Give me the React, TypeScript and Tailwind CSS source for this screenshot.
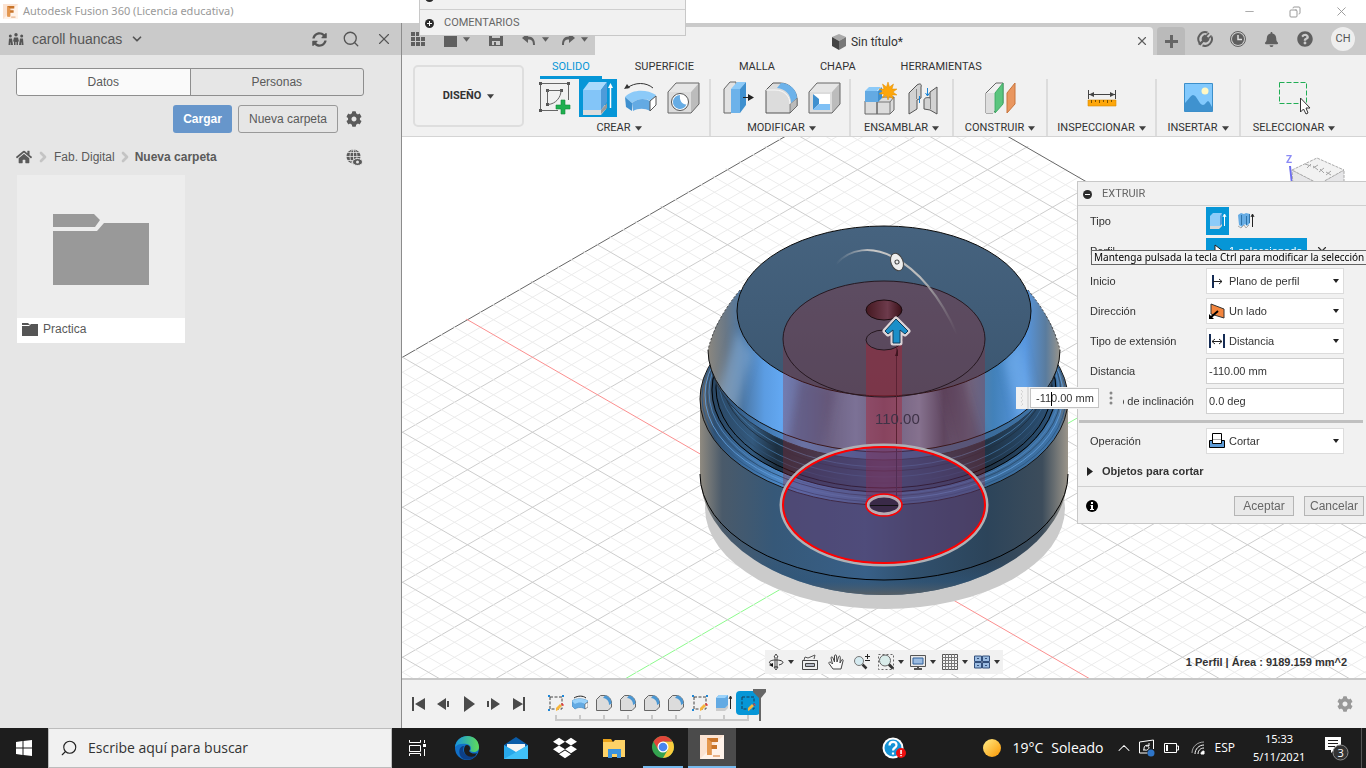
import type { ReactNode } from "react";
import { FaBell, FaCog, FaDropbox, FaHome, FaQuestionCircle, FaSyncAlt } from "react-icons/fa";
import { ChevronDown, ChevronRight, ChevronUp, Copy, Minus, Search, X } from "lucide-react";

function Caret({ className = "text-[#404040]" }: { className?: string }) {
  return (
    <svg width="7" height="5" viewBox="0 0 8 5" className={`shrink-0 ${className}`}>
      <path d="M0 0h8L4 5z" fill="currentColor" />
    </svg>
  );
}

function FusionLogo({ size }: { size: number }) {
  return (
    <svg width={size} height={size} viewBox="0 0 24 24" className="shrink-0">
      <path d="M0 0h24v24H0z" fill="#fbe3d2" />
      <path d="M0 24L24 0v24z" fill="#fff3ea" />
      <path d="M7 3h11v4h-6.500v3H17v4h-5.500v6H7z" fill="#c8742a" />
      <path d="M7 3l4.500 4v13H7z" fill="#e5974d" />
      <path d="M13 20h7v2h-7z" fill="#e9b48c" />
    </svg>
  );
}

/* ---------- ribbon icons, all on a 38px box ---------- */

function Icon38({ children }: { children: ReactNode }) {
  return (
    <svg width="38" height="38" viewBox="0 0 38 38" fill="none">
      {children}
    </svg>
  );
}

const SketchIcon = (
  <Icon38>
    <path d="M5 4.500h27M4.500 5v27M32.500 5v16M5 31.500h17" stroke="#666" />
    <g fill="#555">
      <path d="M3 3h3v3H3zM31 3h3v3h-3zM3 30h3v3H3zM10 10h3v3h-3zM24 10h3v3h-3zM10 24h3v3h-3z" />
    </g>
    <path d="M11.500 24V11.500H25C25 18 20 25 12 25.500" stroke="#666" />
    <path d="M25 21h4v5h5v4h-5v5h-4v-5h-5v-4h5z" fill="#1faf4f" stroke="#128a39" strokeWidth=".6" />
  </Icon38>
);

const ExtrudeIcon = (
  <Icon38>
    <path d="M4 30l4-4h19v4l-5 6H4z" fill="#ddd" />
    <path d="M22 35V31l6-7v5z" fill="#999" />
    <path d="M4 11l6-8h18l-6 8z" fill="#a9dafc" />
    <path d="M4 11h18v20H4z" fill="#83c5f8" />
    <path d="M22 11l6-8v20l-6 8z" fill="#4e9bd9" />
    <path d="M31.500 29V7" stroke="#fff" strokeWidth="1.500" />
    <path d="M29 9l2.500-5L34 9z" fill="#fff" />
  </Icon38>
);

const RevolveIcon = (
  <Icon38>
    <path d="M3 18C10 10 25 10 34 16l-4 7c-5-4-14-4-20 1z" fill="#8ccaf8" />
    <path d="M3 18l7 6v8l-6-4z" fill="#3f90cf" />
    <path d="M10 24c6-5 13-5 18-2v10c-5-3-12-3-17 0z" fill="#63aae3" />
    <path d="M28 22l6-5v9l-6 6z" fill="#fff" stroke="#555" />
    <path d="M5 9C13 3 24 3 31 9" stroke="#333" />
    <path d="M2 10l3-5 3 4z" fill="#333" />
  </Icon38>
);

const HoleIcon = (
  <Icon38>
    <path d="M3 13l8-9h23l-8 9z" fill="#e6e6e6" />
    <path d="M3 13h23v21H3z" fill="#dcdcdc" />
    <path d="M26 13l8-9v21l-8 9z" fill="#bcbcbc" />
    <path d="M3 34V13l8-9h23v21l-8 9z" stroke="#666" />
    <circle cx="15" cy="23" r="8.500" fill="#fff" stroke="#555" />
    <path d="M15 16a7 7 0 106.500 9.500C18 26 14 22 15 16z" fill="#66ace4" />
  </Icon38>
);

const PressPullIcon = (
  <Icon38>
    <path d="M4 10l6-7h6v24l-5 7H4z" fill="#e2e2e2" stroke="#666" />
    <path d="M11 10l6-7h9l-6 7z" fill="#8ccaf8" />
    <path d="M11 10h9v24h-9z" fill="#6cb2ea" />
    <path d="M20 10l6-7v23l-6 8z" fill="#3f90cf" />
    <path d="M23 18.500h7" stroke="#222" />
    <path d="M28 15l6 3.500-6 3.500z" fill="#222" />
  </Icon38>
);

const FilletIcon = (
  <Icon38>
    <path d="M3 34V11l7-7h7c10 0 17 8 17 17v6l-7 7z" fill="#dcdcdc" stroke="#555" />
    <path d="M27 34v-9l7-6v8z" fill="#bbb" stroke="#555" strokeWidth=".6" />
    <path d="M14 9l4-5c9 0 16 7 16 15l-6 5C28 15 22 10 14 9z" fill="#6cb2ea" />
    <path d="M3 11h9c9 0 15 6 15 14" stroke="#f8f8f8" />
  </Icon38>
);

const ShellIcon = (
  <Icon38>
    <path d="M3 13l8-9h23l-8 9z" fill="#e6e6e6" />
    <path d="M3 13h23v21H3z" fill="#dcdcdc" />
    <path d="M26 13l8-9v21l-8 9z" fill="#bcbcbc" />
    <path d="M3 34V13l8-9h23v21l-8 9z" stroke="#666" />
    <path d="M7 15h17v16H7z" fill="#fff" />
    <path d="M7 15l6 5v5l-6 6z" fill="#3f90cf" />
    <path d="M13 25h11v6H7z" fill="#7fc0f5" />
  </Icon38>
);

const ComponentIcon = (
  <Icon38>
    <path d="M4 22h12v13H4zM16 22l4-4h13v13l-4 4H16z" fill="#dcdcdc" stroke="#666" />
    <path d="M16 23h13v12M29 23l4-5" stroke="#777" />
    <path d="M4 12l4-4h12l-4 4z" fill="#8ccaf8" />
    <path d="M4 12h13v11H4z" fill="#63aae3" />
    <path d="M17 12l4-4v11l-4 4z" fill="#3f90cf" />
    <path d="M27 3l1.500 5 4-3-1.500 5h5l-4 3 4 3h-5l1.500 4-4-2.500L27 21l-1.500-4.500-4 2.500 1.500-4h-5l4-3-4-2h5l-1.500-5 4 3z" fill="#fda60a" stroke="#e08c00" strokeWidth=".5" />
  </Icon38>
);

const JointIcon = (
  <Icon38>
    <path d="M5 14l8-8c3-2 5-1 4 2v11l-4 2v9l-8 5z" fill="#d2d2d2" stroke="#555" />
    <path d="M33 8l-7 5v6c-3-1-6 0-6 2v9l6 1 7 4z" fill="#d2d2d2" stroke="#555" />
    <path d="M12.500 20V10M26.500 18v12" stroke="#888" />
    <path d="M15.500 17v7M23.500 9v8" stroke="#1d86d6" />
    <path d="M21.500 14l2 3 2-3" stroke="#1d86d6" />
  </Icon38>
);

const PlaneIcon = (
  <Icon38>
    <path d="M5 14L15 4h7v20L12 34H5z" fill="#f0f0f0" stroke="#666" />
    <path d="M5 14h8v20H5z" fill="#dedede" />
    <path d="M14 14l8-10v21l-8 9z" fill="#5bc57e" stroke="#3fa964" />
    <path d="M26 14l8-10v21l-8 9z" fill="#e9965f" stroke="#c8753c" />
  </Icon38>
);

const MeasureIcon = (
  <Icon38>
    <path d="M5.500 11v9M32.500 11v9M6 15.500h26" stroke="#444" />
    <path d="M6 15.500l5-2.500v5zM32 15.500L27 13v5z" fill="#444" />
    <path d="M5 21h28v6H5z" fill="#fda60a" stroke="#d88a00" strokeWidth=".6" />
    <path d="M8.500 21v3M12.500 21v2M16.500 21v3M20.500 21v2M24.500 21v3M28.500 21v2" stroke="#7c5200" />
  </Icon38>
);

const InsertIcon = (
  <Icon38>
    <path d="M5.500 4.500h28v28h-28z" fill="#82c9fd" stroke="#3c8fca" />
    <circle cx="26" cy="12" r="3.500" fill="#fff7c4" />
    <path d="M6 24c4-4 6-8 8-8 4 0 6 10 10 10 2 0 4-4 5-4s3 4 4 6v4H6z" fill="#3f92cf" />
  </Icon38>
);

const SelectIcon = (
  <Icon38>
    <path d="M4.500 3.500h27v21h-27z" stroke="#20ad54" strokeDasharray="5 2" />
    <path d="M25.500 19v14l3-3 2.500 5 2-1-2-5h4z" fill="#fff" stroke="#333" />
  </Icon38>
);

const ribbonGroups = [
  { label: "CREAR", width: "w-[185px] pl-[3px]", icons: [SketchIcon, ExtrudeIcon, RevolveIcon, HoleIcon], active: 1 },
  { label: "MODIFICAR", width: "w-[140px] pl-[3px]", icons: [PressPullIcon, FilletIcon, ShellIcon] },
  { label: "ENSAMBLAR", width: "w-[103px]", icons: [ComponentIcon, JointIcon] },
  { label: "CONSTRUIR", width: "w-[94px]", icons: [PlaneIcon] },
  { label: "INSPECCIONAR", width: "w-[109px]", icons: [MeasureIcon] },
  { label: "INSERTAR", width: "w-[84px]", icons: [InsertIcon] },
  { label: "SELECCIONAR", width: "w-[106px]", icons: [SelectIcon] },
];

/* ---------- title bar and data panel ---------- */

function TitleBar() {
  return (
    <header className="flex h-[23px] shrink-0 items-center bg-white pl-[3px] text-[#999]">
      <FusionLogo size={15} />
      <h1 className="ml-[5px] flex-1 font-['Noto_Sans',sans-serif] text-[11px]">Autodesk Fusion 360 (Licencia educativa)</h1>
      <button aria-label="Minimizar" className="flex w-[46px] justify-center"><Minus size={13} strokeWidth={1.5} /></button>
      <button aria-label="Restaurar" className="flex w-[46px] justify-center"><Copy size={12} strokeWidth={2} className="-scale-x-100" /></button>
      <button aria-label="Cerrar" className="mr-0.5 flex w-[46px] justify-center"><X size={15} strokeWidth={1.5} /></button>
    </header>
  );
}

function DataPanel() {
  return (
    <aside className="flex w-[402px] shrink-0 flex-col border-r border-[#8c8c8c] bg-[#e6e6e6] text-xs text-[#5a5a5a]">
      <div className="flex h-8 items-center bg-[#cacaca] pl-2 pr-2 text-[#555]">
        <svg width="16" height="12" viewBox="0 0 16 12" fill="currentColor">
          <circle cx="8" cy="1.700" r="1.700" />
          <circle cx="2.300" cy="3" r="1.500" />
          <circle cx="13.700" cy="3" r="1.500" />
          <path d="M6 4.500h4l1 4h-1V12H8.500V9h-1v3H6V8.500H5zM1 5.500h3l1 6.500H3V9.500h-.5V12H.500zM12 5.500h3l.5 6.500h-2V9.500H13V12h-2z" />
        </svg>
        <button className="ml-2 flex items-center gap-2 text-sm">
          caroll huancas <ChevronDown size={14} strokeWidth={3} />
        </button>
        <div className="ml-auto flex items-center gap-[15px]">
          <button aria-label="Actualizar"><FaSyncAlt size={15} /></button>
          <button aria-label="Buscar"><Search size={18} strokeWidth={1.75} /></button>
          <button aria-label="Cerrar panel"><X size={18} strokeWidth={1.5} /></button>
        </div>
      </div>
      <div className="mr-[37px] ml-4 mt-[13px] flex h-7 overflow-hidden rounded-[3px] border border-[#8e8e8e]">
        <button className="flex-1 border-r border-[#8e8e8e] bg-[#fafafa]">Datos</button>
        <button className="flex-1">Personas</button>
      </div>
      <div className="mr-[39px] mt-[9px] flex items-center justify-end">
        <button className="h-7 w-[59px] rounded-[3px] bg-[#6796cb] font-bold text-white">Cargar</button>
        <button className="ml-1.5 h-7 w-[100px] rounded-[3px] border border-[#999]">Nueva carpeta</button>
        <button aria-label="Ajustes" className="ml-2"><FaCog size={16} /></button>
      </div>
      <nav className="mr-[38px] ml-4 mt-4 flex h-4 items-center">
        <a href="#inicio" aria-label="Inicio"><FaHome size={16} /></a>
        <ChevronRight size={16} strokeWidth={4} className="ml-[3px] mr-[3px] text-[#c4c4c4]" />
        <a href="#fab">Fab. Digital</a>
        <ChevronRight size={16} strokeWidth={4} className="mx-0.5 text-[#c4c4c4]" />
        <a href="#nueva" className="font-bold">Nueva carpeta</a>
        <button aria-label="Ver en la web" className="ml-auto">
          <svg width="17" height="17" viewBox="0 0 17 17" fill="none">
            <circle cx="7.500" cy="7.500" r="7" fill="#5a5a5a" />
            <path d="M7.500 0v15M0 7.500h15M1.500 3.500h12M1.500 11.500h12" stroke="#e6e6e6" strokeWidth=".8" />
            <ellipse cx="7.500" cy="7.500" rx="3.500" ry="7" stroke="#e6e6e6" strokeWidth=".8" />
            <ellipse cx="11.500" cy="13" rx="5" ry="3.500" fill="#5a5a5a" stroke="#e6e6e6" />
            <circle cx="11.500" cy="13" r="1.500" fill="#e6e6e6" />
          </svg>
        </button>
      </nav>
      <a href="#practica" className="ml-[17px] mt-2.5 flex w-[168px] flex-col">
        <span className="flex h-[143px] items-center justify-center bg-[#ededed] pt-1">
          <svg width="96" height="72" viewBox="0 0 96 72" fill="#999">
            <path d="M0 1h41l6 6-5 7H0zM51 10h45v62H0V18h44z" />
          </svg>
        </span>
        <span className="flex h-[25px] items-center gap-[5px] bg-white pb-[3px] pl-[5px]">
          <svg width="16" height="13" viewBox="0 0 16 13" fill="#555">
            <path d="M0 0h6l2 2H0zM9 1h7v12H0V3h7z" />
          </svg>
          Practica
        </span>
      </a>
    </aside>
  );
}

/* ---------- document strip and ribbon ---------- */

function DocumentStrip() {
  return (
    <div className="flex h-8 shrink-0 bg-[#cacaca] text-[#5f5f5f]">
      <div className="flex w-[193px] shrink-0 items-center gap-[19px] pl-[9px]">
        <button aria-label="Panel de datos">
          <svg width="14" height="14" viewBox="0 0 14 14" fill="currentColor">
            <path d="M0 0h4v4H0zM5 0h4v4H5zM10 0h4v4h-4zM0 5h4v4H0zM5 5h4v4H5zM10 5h4v4h-4zM0 10h4v4H0zM5 10h4v4H5zM10 10h4v4h-4z" />
          </svg>
        </button>
        <button aria-label="Archivo" className="flex items-center gap-1.5">
          <svg width="13" height="16" viewBox="0 0 13 16" fill="currentColor"><path d="M0 0h9l4 3v13H0z" /></svg>
          <Caret className="text-[#5f5f5f]" />
        </button>
        <button aria-label="Guardar">
          <svg width="14" height="14" viewBox="0 0 14 14" fill="currentColor">
            <path fillRule="evenodd" d="M0 0h12l2 2v12H0zM3 1v5h8V1zM3 9v4h8V9zM5 10h2v3H5z" />
          </svg>
        </button>
        <div className="flex gap-3">
          <button aria-label="Deshacer" className="flex items-center gap-1.5">
            <svg width="14" height="12" viewBox="0 0 14 12"><path d="M0 5l6-5v3.500c5 0 7 3 7 8.500h-2c0-4-1-5.500-5-5.500V10z" fill="currentColor" /></svg>
            <Caret className="text-[#5f5f5f]" />
          </button>
          <button aria-label="Rehacer" className="flex items-center gap-1.5">
            <svg width="14" height="12" viewBox="0 0 14 12"><path d="M14 5L8 0v3.500C3 3.500 1 6.500 1 12h2c0-4 1-5.500 5-5.500V10z" fill="currentColor" /></svg>
            <Caret className="text-[#5f5f5f]" />
          </button>
        </div>
      </div>
      <div className="mt-1 flex flex-1 items-center rounded-tr bg-[#f1f1f1] pr-1">
        <div className="flex flex-1 items-center justify-center gap-1 pl-1 pt-px font-['Roboto',sans-serif] text-xs text-[#333]">
          <svg width="16" height="16" viewBox="0 0 16 16">
            <path d="M8 0l7 3-7 4-7-4z" fill="#aaa" />
            <path d="M1 3l7 4v9l-7-4z" fill="#444" />
            <path d="M15 3L8 7v9l7-4z" fill="#777" />
          </svg>
          Sin título*
        </div>
        <button aria-label="Cerrar documento"><X size={14} /></button>
      </div>
      <button aria-label="Nuevo diseño" className="ml-1 mt-1 flex w-7 items-center justify-center rounded-t bg-[#bababa]">
        <svg width="13" height="13" viewBox="0 0 13 13"><path d="M5 0h3v5h5v3H8v5H5V8H0V5h5z" fill="#666" /></svg>
      </button>
      <div className="ml-3 mr-[11px] flex items-center gap-[17px]">
        <button aria-label="Extensiones">
          <svg width="16" height="16" viewBox="0 0 16 16" fill="none">
            <path d="M10.500 1.500A7 7 0 002.500 12M5.500 14.500A7 7 0 0014.500 5.500" stroke="#5f5f5f" strokeWidth="2" />
            <path d="M1 13l4-3.500c-1-3 1-5 3-6L12.500 8c-1 3-3 4-6 3L3.500 14.500z" fill="#5f5f5f" />
            <path d="M9 5l3-3M11.500 7.500l3-3" stroke="#5f5f5f" strokeWidth="1.500" />
          </svg>
        </button>
        <button aria-label="Estado de trabajos">
          <svg width="16" height="16" viewBox="0 0 16 16" fill="none">
            <circle cx="8" cy="8" r="7.500" stroke="#5f5f5f" />
            <circle cx="8" cy="8" r="6" fill="#5f5f5f" />
            <path d="M8 4v4.500h4" stroke="#e0e0e0" strokeWidth="1.500" />
          </svg>
        </button>
        <button aria-label="Notificaciones" className="px-px"><FaBell size={15} /></button>
        <button aria-label="Ayuda"><FaQuestionCircle size={16} /></button>
        <button className="ml-px h-6 w-6 rounded-full bg-[#eee] font-['Roboto',sans-serif] text-[11px] text-[#555]">CH</button>
      </div>
    </div>
  );
}

function Ribbon() {
  return (
    <div className="flex h-[82px] shrink-0 border-b border-[#d4d4d4] bg-[#f1f1f1] font-['Roboto',sans-serif] text-[11px] text-[#333]">
      <button className="ml-[11px] mt-2.5 flex h-[62px] w-[111px] shrink-0 items-center justify-center gap-1.5 rounded-[5px] border-2 border-[#dedede] font-bold">
        DISEÑO <Caret />
      </button>
      <div className="ml-0.5 flex flex-1 flex-col">
        <div role="tablist" className="ml-3.5 flex h-6 gap-[21px]">
          <button role="tab" aria-selected="true" className="border-b-[3px] border-[#0696d7] px-3 pt-1 text-[#0696d7]">SOLIDO</button>
          {["SUPERFICIE", "MALLA", "CHAPA", "HERRAMIENTAS"].map((tab) => (
            <button key={tab} role="tab" aria-selected="false" className="border-b-[3px] border-transparent px-3 pt-1">{tab}</button>
          ))}
        </div>
        <div className="flex">
          {ribbonGroups.map((group, index) => (
            <section key={group.label} className={`flex ${group.width} shrink-0 flex-col items-center ${index < 6 ? "border-r-2 border-[#dcdcdc]" : ""}`}>
              <div className="flex gap-[5px]">
                {group.icons.map((icon, i) => (
                  <button key={i} aria-label={`${group.label} ${i + 1}`} className={group.active === i ? "bg-[#0696d7]" : ""}>{icon}</button>
                ))}
              </div>
              <button className="flex h-[19px] items-center gap-1 pt-[3px]">{group.label} <Caret /></button>
            </section>
          ))}
        </div>
      </div>
    </div>
  );
}

/* ---------- 3D canvas ---------- */

// Construction grid: both line families run at 30 degrees, one cell is 26 wide.
function GridLines() {
  const slope = 0.577;
  const lines: ReactNode[] = [];
  for (let i = -30; i <= 90; i++) {
    const x = 663 + i * 26;
    const color = i === 0 ? "#8dfa8d" : i === -30 ? "#666" : i % 5 === 0 ? "#cdcdcd" : "#ececec";
    lines.push(<path key={`a${i}`} d={`M${x - 300} ${657 + 300 * slope}L${x + 1400} ${657 - 1400 * slope}`} stroke={color} />);
  }
  for (let i = -70; i <= 33; i++) {
    const x = 1052 + i * 26;
    const color = i === 0 ? "#fb8f8f" : i === 33 ? "#666" : i % 5 === 0 ? "#cdcdcd" : "#ececec";
    lines.push(<path key={`b${i}`} d={`M${x + 300} ${657 + 300 * slope}L${x - 1400} ${657 - 1400 * slope}`} stroke={color} />);
  }
  return (
    <g fill="none" clipPath="url(#floor)">
      {lines}
    </g>
  );
}

const grooves = [
  { cy: 397, rx: 182, ry: 105, color: "#2f5a87" },
  { cy: 395, rx: 179, ry: 104, color: "#5c97d4" },
  { cy: 393, rx: 177, ry: 103, color: "#2d4f72" },
  { cy: 392, rx: 175, ry: 102, color: "#4c82b9" },
  { cy: 390, rx: 172, ry: 102, color: "#000" },
  { cy: 388, rx: 168, ry: 100, color: "#000" },
  { cy: 384, rx: 167, ry: 99, color: "#2f4f70" },
  { cy: 380, rx: 165, ry: 97, color: "#3a6690" },
  { cy: 375, rx: 163, ry: 96, color: "#1f3245" },
  { cy: 370, rx: 164, ry: 97, color: "#43739f" },
];

const coneShape = "M708 350A176 102 0 001060 350Q1053 320 1028 290H740Q715 320 708 350z";

function Model() {
  return (
    <svg className="absolute inset-0 h-full w-full" viewBox="402 137 964 541" preserveAspectRatio="xMidYMid slice">
      <defs>
        <clipPath id="floor"><path d="M402 356L896 70L1366 341V678H402z" /></clipPath>
        <linearGradient id="body">
          <stop offset="0" stopColor="#8f8a80" />
          <stop offset=".06" stopColor="#4a5a6a" />
          <stop offset=".2" stopColor="#365878" />
          <stop offset=".45" stopColor="#386088" />
          <stop offset=".58" stopColor="#30506d" />
          <stop offset=".78" stopColor="#2c445a" />
          <stop offset=".93" stopColor="#3c4c5b" />
          <stop offset="1" stopColor="#9b958a" />
        </linearGradient>
        <linearGradient id="base" gradientUnits="userSpaceOnUse" x1="0" y1="560" x2="0" y2="596">
          <stop offset="0" stopColor="#2d5274" stopOpacity="0" />
          <stop offset=".6" stopColor="#2f5578" stopOpacity=".6" />
          <stop offset="1" stopColor="#5c6062" />
        </linearGradient>
        <linearGradient id="rim">
          <stop offset="0" stopColor="#776f66" />
          <stop offset=".04" stopColor="#2f5072" />
          <stop offset=".12" stopColor="#3c6d9f" />
          <stop offset=".27" stopColor="#5597dd" />
          <stop offset=".5" stopColor="#44719f" />
          <stop offset=".8" stopColor="#3a6b9a" />
          <stop offset=".97" stopColor="#3f74a8" />
          <stop offset="1" stopColor="#766f66" />
        </linearGradient>
        <linearGradient id="neck">
          <stop offset="0" stopColor="#294561" />
          <stop offset=".12" stopColor="#33597d" />
          <stop offset=".19" stopColor="#1d2f40" />
          <stop offset=".5" stopColor="#34597f" />
          <stop offset=".8" stopColor="#1f3346" />
          <stop offset="1" stopColor="#2c5379" />
        </linearGradient>
        <linearGradient id="cone" gradientUnits="userSpaceOnUse" x1="708" y1="0" x2="1060" y2="0">
          <stop offset="0" stopColor="#8b877f" />
          <stop offset=".05" stopColor="#6a7886" />
          <stop offset=".1" stopColor="#4c78a6" />
          <stop offset=".16" stopColor="#5b9ce2" />
          <stop offset=".21" stopColor="#63a8f2" />
          <stop offset=".28" stopColor="#5590d0" />
          <stop offset=".34" stopColor="#5a7eac" />
          <stop offset=".42" stopColor="#7096c8" />
          <stop offset=".5" stopColor="#5c7aa6" />
          <stop offset=".6" stopColor="#7f96bd" />
          <stop offset=".67" stopColor="#465677" />
          <stop offset=".74" stopColor="#62809f" />
          <stop offset=".81" stopColor="#4281b9" />
          <stop offset=".9" stopColor="#5796df" />
          <stop offset=".96" stopColor="#5a7c9e" />
          <stop offset="1" stopColor="#98948b" />
        </linearGradient>
        <linearGradient id="top" x2="0" y2="1">
          <stop offset="0" stopColor="#46637f" />
          <stop offset="1" stopColor="#3b5670" />
        </linearGradient>
        <linearGradient id="bore">
          <stop offset="0" stopColor="#451820" />
          <stop offset=".6" stopColor="#6d3b4c" />
          <stop offset="1" stopColor="#3a1018" />
        </linearGradient>
        <linearGradient id="arc">
          <stop offset="0" stopColor="#bbb" stopOpacity="0" />
          <stop offset=".3" stopColor="#c8c8c8" />
          <stop offset=".7" stopColor="#bbb" />
          <stop offset="1" stopColor="#999" stopOpacity="0" />
        </linearGradient>
        <filter id="soft"><feGaussianBlur stdDeviation="4" /></filter>
        <clipPath id="coneClip"><path d={coneShape} /></clipPath>
      </defs>

      <GridLines />

      <ellipse cx="885" cy="508" rx="180" ry="101" fill="#cbcbcb" />
      <path d="M700 399V474A184 121 0 001068 474V399z" fill="url(#body)" />
      <path d="M700 474A184 106 0 001068 474A184 121 0 01700 474z" fill="url(#base)" />
      <path d="M700 474A184 106 0 001068 474" fill="none" stroke="#000" />
      <ellipse cx="884" cy="399" rx="184" ry="106" fill="url(#rim)" stroke="#151515" />
      <ellipse cx="884" cy="390" rx="173" ry="102" fill="url(#neck)" />
      {grooves.map((g) => (
        <ellipse key={g.cy} cx="884" cy={g.cy} rx={g.rx} ry={g.ry} fill="none" stroke={g.color} />
      ))}
      <ellipse cx="884" cy="355" rx="174" ry="105" fill="url(#rim)" stroke="#26384b" />

      <path d={coneShape} fill="url(#cone)" />
      <g clipPath="url(#coneClip)">
        <g filter="url(#soft)">
          <path d="M738 330L715 400L735 412L752 355z" fill="#8db4dc" opacity=".5" />
          <path d="M800 378L785 460L818 466L836 390z" fill="#40608f" opacity=".5" />
          <path d="M940 385L960 460L985 450L962 375z" fill="#39415e" opacity=".4" />
          <path d="M1004 360L1020 430L1036 410L1020 340z" fill="#74b0f0" opacity=".6" />
        </g>
      </g>
      <path d="M708 350A176 102 0 001060 350" fill="none" stroke="#111" />
      <path d="M740 290Q715 320 708 350M1028 290Q1053 320 1060 350" fill="none" stroke="#444" strokeDasharray="2 2" />
      <ellipse cx="884" cy="311" rx="147" ry="85" fill="url(#top)" stroke="#0b0b0b" />

      {/* cut preview */}
      <path d="M783 339A101 58 0 01985 339V505A101 59 0 01783 505z" fill="#962832" opacity=".33" />
      <path d="M866 340A18 10 0 00902 340V505A18 10 0 01866 505z" fill="#b01f30" opacity=".4" />
      <ellipse cx="884" cy="339" rx="101" ry="58" fill="none" stroke="#261820" />
      <ellipse cx="884" cy="310" rx="18" ry="10" fill="url(#bore)" stroke="#1c0c10" />
      <ellipse cx="884" cy="340" rx="18" ry="10" fill="none" stroke="#261820" />
      <path d="M896.500 345V505" stroke="#5a2233" />
      <path d="M895 356l3-8v8z" fill="#3f1520" />
      <text x="875" y="424" fontSize="15" fill="#3f3347" fontFamily="Liberation Sans, sans-serif">110.00</text>

      <ellipse cx="884" cy="505" rx="101" ry="59" fill="#4049a0" opacity=".3" />
      <ellipse cx="884" cy="505" rx="103" ry="60" fill="none" stroke="#aeb0b5" strokeWidth="3" />
      <ellipse cx="884" cy="505" rx="101" ry="58" fill="none" stroke="#f00" strokeWidth="2" />
      <ellipse cx="884" cy="505" rx="16" ry="9" fill="#3a2a48" stroke="#b9aab2" strokeWidth="3" />
      <ellipse cx="884" cy="505" rx="18" ry="11" fill="none" stroke="#f00" strokeWidth="1.500" />
      <path d="M870 505.500h28" stroke="#111" />

      {/* taper handle and direction arrow */}
      <path d="M836 264C850 248 872 246 893 257C920 271 940 296 957 334" fill="none" stroke="url(#arc)" strokeWidth="2" />
      <ellipse cx="897" cy="262" rx="6" ry="9" transform="rotate(-22 897 262)" fill="#eee" stroke="#444" />
      <ellipse cx="897" cy="262" rx="2" ry="2" transform="rotate(-22 897 262)" fill="none" stroke="#444" />
      <path d="M896 319L908 331L905 334L900 330V343H893V330L888 334L885 331z" fill="#1a8fc9" stroke="#ddd5d8" strokeWidth="5" strokeLinejoin="round" />
      <path d="M896 319L908 331L905 334L900 330V343H893V330L888 334L885 331z" fill="#1a8fc9" stroke="#123f5c" strokeLinejoin="round" />

      {/* view cube */}
      <text x="1286" y="163" fontSize="10" fontWeight="bold" fill="#8b8bf5" fontFamily="Roboto, sans-serif">Z</text>
      <path d="M1290 166L1292 184" stroke="#6c6cf0" strokeWidth="2" />
      <path d="M1292 170L1319 184L1344 170V200H1294z" fill="#e6e6e8" stroke="#aaa" strokeDasharray="3 1" />
      <path d="M1292 170L1317 158L1344 170L1319 184z" fill="#f2f2f2" stroke="#aaa" strokeDasharray="3 1" />
      <path d="M1305 164l6 2M1307 168l4-4M1313 168l5-3M1313 166l5 4M1319 172l5-4M1320 169l4 4M1326 175l5-4M1326 172l5 3" stroke="#a5a5a5" />
    </svg>
  );
}

/* ---------- extrude dialog ---------- */

function DialogRow({ id, label, children }: { id: string; label: string; children: ReactNode }) {
  return (
    <div className="flex h-[30px] items-center">
      <label htmlFor={id} className="w-[116px] shrink-0">{label}</label>
      {children}
    </div>
  );
}

function DialogSelect({ id, value, icon }: { id: string; value: string; icon: ReactNode }) {
  return (
    <span className="flex h-[26px] w-[138px] items-center border border-[#dcdcdc] bg-white pl-0.5 pr-1">
      <svg width="16" height="16" viewBox="0 0 16 16" fill="none" className="shrink-0">{icon}</svg>
      <select id={id} defaultValue={value} className="ml-1 min-w-0 flex-1 appearance-none bg-transparent outline-none">
        <option>{value}</option>
      </select>
      <svg width="6" height="4" viewBox="0 0 6 4"><path d="M0 0h6L3 4z" fill="#222" /></svg>
    </span>
  );
}

function ExtrudeDialog() {
  return (
    <section aria-label="Extruir" className="absolute right-0 top-11 w-[289px] border border-r-0 border-[#c8c8c8] bg-[#f1f1f1] text-[11px] text-[#333]">
      <div className="flex h-6 items-center gap-2.5 border-b border-[#cfcfcf] pl-[5px] pt-px font-['Roboto',sans-serif] text-[#666]">
        <svg width="9" height="9" viewBox="0 0 9 9"><circle cx="4.500" cy="4.500" r="4.500" fill="#2c2c2c" /><path d="M2 4h5v1H2z" fill="#fff" /></svg>
        EXTRUIR
      </div>
      <div className="pl-3">
        <DialogRow id="tipo" label="Tipo">
          <button id="tipo" aria-label="Extruir" className="flex h-7 w-[23px] items-center justify-center bg-[#0696d7]">
            <svg width="18" height="18" viewBox="0 0 18 18"><path d="M1 4l3-3h9v11l-2 2H1z" fill="#8ccbf9" /><path d="M11 4l2-3v12l-2 2z" fill="#4e9bd9" /><path d="M1 14h10l2-2v2l-3 3H1z" fill="#d7d7d7" /><path d="M15.500 14V3M14 5l1.500-3L17 5" stroke="#fff" fill="none" /></svg>
          </button>
          <button aria-label="Extrusión delgada" className="ml-2">
            <svg width="18" height="18" viewBox="0 0 18 18"><path d="M1 3l3-2 3 1 2-1 4 1v9l-3 3-2-2-3 3-3-2z" fill="#66ace4" /><path d="M4.500 3v10M9.500 4v9M12.500 2v9" stroke="#2f73a8" /><path d="M1 14l3 2 3-3 2 3 3-3" stroke="#aaa" fill="none" /><path d="M15.500 15V3M14 5l1.500-3L17 5" stroke="#222" fill="none" /></svg>
          </button>
        </DialogRow>
        <DialogRow id="perfil" label="Perfil">
          <button id="perfil" className="flex h-[26px] w-[101px] items-center gap-[5px] bg-[#0696d7] pl-2 text-white">
            <svg width="10" height="14" viewBox="0 0 10 14"><path d="M1 1v11l3-3 2 4 2-1-2-4h4z" fill="#fff" stroke="#222" /></svg>
            1 seleccionado
          </button>
          <button aria-label="Borrar selección" className="ml-2"><X size={14} /></button>
        </DialogRow>
        <DialogRow id="inicio" label="Inicio">
          <DialogSelect id="inicio" value="Plano de perfil" icon={<><path d="M4 2v13" stroke="#152c55" strokeWidth="2" /><path d="M4 8.500h9M10 6l3 2.500L10 11" stroke="#222" /></>} />
        </DialogRow>
        <DialogRow id="direccion" label="Dirección">
          <DialogSelect id="direccion" value="Un lado" icon={<><path d="M2 1l13 5v9L2 11z" fill="#f3853e" stroke="#333" /><path d="M1 15l8-7" stroke="#000" strokeWidth="2" /><path d="M0 16v-5l5 5z" fill="#000" /></>} />
        </DialogRow>
        <DialogRow id="extension" label="Tipo de extensión">
          <DialogSelect id="extension" value="Distancia" icon={<><path d="M1 1v14M15 1v14" stroke="#152c55" strokeWidth="2" /><path d="M3 8.500h10M6 6L3 8.500 6 11M10 6l3 2.500L10 11" stroke="#222" /></>} />
        </DialogRow>
        <DialogRow id="distancia" label="Distancia">
          <input id="distancia" defaultValue="-110.00 mm" className="h-[26px] w-[138px] border border-[#cfcfcf] bg-white px-0.5 outline-none" />
        </DialogRow>
        <DialogRow id="angulo" label="Ángulo de inclinación">
          <input id="angulo" defaultValue="0.0 deg" className="h-[26px] w-[138px] border border-[#cfcfcf] bg-white px-0.5 outline-none" />
        </DialogRow>
      </div>
      <hr className="mb-[3px] ml-px mr-[3px] mt-1 border-t-3 border-[#c0c0c0]" />
      <div className="pl-3">
        <DialogRow id="operacion" label="Operación">
          <DialogSelect id="operacion" value="Cortar" icon={<><path d="M.5 7.500h15v7H.500z" fill="#5d9bd6" stroke="#000" /><path d="M3.500.500h9v10h-9z" fill="#fff" stroke="#000" /><path d="M4 6.500h8" stroke="#aaa" /></>} />
        </DialogRow>
        <button className="-ml-[3px] flex h-[30px] items-center gap-[9px] text-[11px] font-bold">
          <svg width="6" height="9" viewBox="0 0 6 9"><path d="M0 0l6 4.500L0 9z" fill="#222" /></svg>
          Objetos para cortar
        </button>
      </div>
      <div className="flex h-[37px] items-center border-t border-[#cfcfcf] pl-2 pr-0.5 pt-px text-xs text-[#666]">
        <svg width="12" height="12" viewBox="0 0 12 12"><circle cx="6" cy="6" r="6" fill="#000" /><path d="M5 2h2v2H5zM4.500 5H7v4h1v1H4V9h1V6h-.5z" fill="#fff" /></svg>
        <button className="ml-auto h-5 w-[60px] border border-[#b5b5b5] bg-[#e9e9e9]">Aceptar</button>
        <button className="ml-2.5 h-5 w-[60px] border border-[#b5b5b5] bg-[#e9e9e9]">Cancelar</button>
      </div>
    </section>
  );
}

// Floating value box attached to the extrude arrow
function ValueBox() {
  return (
    <div className="absolute right-[243px] top-[250px] flex h-[22px] w-[107px] items-center bg-[#f1f1f1]">
      <svg width="14" height="22" viewBox="0 0 14 22"><path d="M5 3l2 2-2 2 2 2-2 2 2 2-2 2 2 2-2 2" fill="none" stroke="#c4c4c4" strokeDasharray="1 1" /><path d="M11 0h2v22h-2z" fill="#dcdcdc" /></svg>
      <span className="relative">
        <input aria-label="Distancia de extrusión" defaultValue="-110.00 mm" className="block h-5 w-[69px] border border-[#c4c4c4] bg-white pl-[5px] text-[11px] text-[#333] outline-none" />
        <i className="absolute left-[21px] top-1 h-3.5 w-px bg-black" />
      </span>
      <svg width="4" height="14" viewBox="0 0 4 14" className="ml-2.5" fill="#888"><circle cx="2" cy="2" r="1.500" /><circle cx="2" cy="7" r="1.500" /><circle cx="2" cy="12" r="1.500" /></svg>
    </div>
  );
}

const navTools = [
  {
    label: "Órbita",
    caret: true,
    icon: <><path d="M7 3v10h2V3h1L8 0 6 3zM6 13h4l-2 3z" fill="#fff" stroke="#444" /><path d="M5 11C-1 9 1 6 8 6s10 3 3 5" stroke="#333" /><path d="M1 11l4-2v4z" fill="#111" /></>,
  },
  {
    label: "Mirar a",
    icon: <><path d="M.5 6.500h15v9H.500z" fill="#eee" stroke="#444" /><path d="M3.500 9.500h9v3h-9z" fill="#b4b9c4" stroke="#444" /><path d="M2 6l1-3 3 1 7-3-1 4" stroke="#555" /></>,
  },
  {
    label: "Encuadre",
    icon: <path d="M5 15L1 9.500c-.5-1.500 1-2 2-1L4.500 10 3 4c0-1.500 1.500-1.500 2 0l1.500 4L6.500 2c0-1.500 2-1.500 2 0L9 8l1.500-5c.5-1.500 2-1 1.800.5L12 9l1.500-3c.8-1 2-.5 1.500 1l-2 8z" fill="#fafafa" stroke="#444" />,
  },
  {
    label: "Zoom",
    icon: <><circle cx="5" cy="7" r="4.500" fill="#d5eaf0" stroke="#777" /><path d="M8.500 10.500l4 4" stroke="#333" strokeWidth="2.500" /><path d="M11 2.500h5M13.500 0v5M11 6.500h5" stroke="#222" /></>,
  },
  {
    label: "Ajustar",
    caret: true,
    icon: <><path d="M.5.500h15v15H.500z" stroke="#666" strokeDasharray="2 2" /><circle cx="7" cy="6.500" r="5.500" fill="#d9ecea" stroke="#666" /><path d="M11 10.500l4 4" stroke="#333" strokeWidth="3" /></>,
  },
  {
    label: "Visualización",
    caret: true,
    icon: <><path d="M.5 1.500h15v11H.500z" fill="#e8e8e8" stroke="#555" /><path d="M3 4h10v6H3z" fill="#9bbce2" stroke="#33639c" /><path d="M4 15h8M8 12v3" stroke="#555" strokeWidth="2" /></>,
  },
  {
    label: "Rejilla",
    caret: true,
    icon: <><path d="M.5.500h15v15H.500z" fill="#f5f5f5" stroke="#555" /><path d="M3.500 0v16M6.500 0v16M9.500 0v16M12.500 0v16M0 3.500h16M0 6.500h16M0 9.500h16M0 12.500h16" stroke="#777" /></>,
  },
  {
    label: "Ventanas",
    caret: true,
    icon: <><path d="M.5 2h7v5.500h-7zM8.500 2h7v5.500h-7zM.5 8.500h7V14h-7zM8.500 8.500h7V14h-7z" fill="#9bbce2" stroke="#33507c" /><path d="M3 4h2v1H3zM11 4h2v1h-2zM3 11h2v1H3zM11 11h2v1h-2z" fill="#33507c" /></>,
  },
];

function Viewport() {
  return (
    <main className="relative min-h-0 flex-1 overflow-hidden bg-white">
      <Model />
      <ExtrudeDialog />
      <div role="tooltip" className="absolute right-0 top-[113px] h-[15px] w-[275px] overflow-hidden whitespace-nowrap border border-r-0 border-[#646464] bg-[#f2f2f2] pl-0.5 font-['Noto_Sans',sans-serif] text-[10px] leading-[13px] text-black">
        Mantenga pulsada la tecla Ctrl para modificar la selección
      </div>
      <ValueBox />
      <div className="absolute bottom-1 left-1/2 flex h-6 w-[238px] -translate-x-1/2 items-center gap-1.5 bg-[#f1f1f1] pl-[3px]">
        {navTools.map((tool) => (
          <button key={tool.label} aria-label={tool.label} className={`flex shrink-0 items-center gap-1 ${tool.caret ? "" : "px-0.5"}`}>
            <svg width="16" height="16" viewBox="0 0 16 16" fill="none">{tool.icon}</svg>
            {tool.caret && <svg width="6" height="4" viewBox="0 0 6 4"><path d="M0 0h6L3 4z" fill="#333" /></svg>}
          </button>
        ))}
      </div>
      <p className="absolute bottom-2 right-[19px] text-[11px] font-bold text-[#333]">1 Perfil | Área : 9189.159 mm^2</p>
    </main>
  );
}

/* ---------- timeline ---------- */

const sketchFeature = (
  <>
    <path d="M2 2h12v12H2z" stroke="#444" strokeDasharray="3 1.500" />
    <path d="M0 0h2v2H0zM14 0h2v2h-2zM0 14h2v2H0z" fill="#1d86d6" />
    <path d="M8 16v-3l4-4 2 2-4 4z" fill="#f8b63c" />
    <path d="M13 9l1-1 2 2-1 1z" fill="#e33" />
  </>
);

const activeSketchFeature = (
  <>
    <path d="M2 2h12v12H2z" stroke="#1b3a55" strokeDasharray="3 1.500" />
    <path d="M8 16v-3l4-4 2 2-4 4z" fill="#f8b63c" />
    <path d="M13 9l1-1 2 2-1 1z" fill="#b0506a" />
  </>
);

const filletFeature = (
  <>
    <path d="M.5 15.500v-11l4-4H8c5 0 7.500 4 7.500 8V12L12 15.500z" fill="#dcdcdc" stroke="#666" />
    <path d="M7 3l2-2.500c4 .5 6.500 4 6.500 8L13 10c0-4-2-6.500-6-7z" fill="#4b97d3" />
  </>
);

const features = [
  { name: "Boceto 1", icon: sketchFeature },
  {
    name: "Revolución",
    icon: <><path d="M0 6c4-3 11-3 16 0v5l-3 3c-3-2-7-2-10 0l-3-3z" fill="#63aae3" stroke="#3c83bb" strokeWidth=".6" /><path d="M0 6c4-3 11-3 16 0l-3 3c-3-2-7-2-10 0z" fill="#9ad2fa" /><path d="M2 3c4-2.500 9-2.500 12 0" stroke="#222" /><path d="M13 9l3-2v5l-3 2z" fill="#fff" stroke="#555" strokeWidth=".6" /></>,
  },
  { name: "Empalme 1", icon: filletFeature },
  { name: "Empalme 2", icon: filletFeature },
  { name: "Empalme 3", icon: filletFeature },
  { name: "Empalme 4", icon: filletFeature },
  { name: "Boceto 2", icon: sketchFeature },
  {
    name: "Extrusión",
    icon: <><path d="M0 12h9l3-2v3l-3 3H0z" fill="#ccc" /><path d="M0 3l3-3h9v10l-3 3H0z" fill="#63aae3" /><path d="M0 3l3-3h9L9 3z" fill="#9ad2fa" /><path d="M14.500 14V2M13 4l1.500-3L16 4" stroke="#222" /></>,
  },
  { name: "Boceto 3", icon: activeSketchFeature },
];

const transport = [
  { label: "Ir al inicio", d: "M1 1h2v14H1zM14 2v12L4 8z" },
  { label: "Paso atrás", d: "M10 2v12L1 8zM11 5h2v6h-2z" },
  { label: "Reproducir", d: "M3 0l11 8-11 8z" },
  { label: "Paso adelante", d: "M5 2v12l9-6zM1 5h2v6H1z" },
  { label: "Ir al final", d: "M12 1h2v14h-2zM2 2v12l10-6z" },
];

function Timeline() {
  return (
    <footer className="flex h-[50px] shrink-0 border-t-2 border-[#c8c8c8] bg-[#f1f1f1]">
      <div className="ml-[9px] flex items-center gap-[9px]">
        {transport.map((item) => (
          <button key={item.label} aria-label={item.label}>
            <svg width="16" height="16" viewBox="0 0 16 16" fill="#4a4a4a"><path d={item.d} /></svg>
          </button>
        ))}
      </div>
      <div className="relative ml-[17px] mt-[11px] h-[31px]">
        <div className="flex">
          {features.map((feature, index) => (
            <button key={feature.name} aria-label={feature.name} className={`flex h-6 w-6 items-center justify-center ${index === 8 ? "rounded-sm bg-[#0696d7]" : ""}`}>
              <svg width="16" height="16" viewBox="0 0 16 16" fill="none">{feature.icon}</svg>
            </button>
          ))}
        </div>
        <svg width="216" height="7" viewBox="0 0 216 7" fill="none">
          <path d="M12 0v5h192V0M36 0v5M60 0v5M84 0v5M108 0v5M132 0v5M156 0v5M180 0v5" stroke="#c9c9c9" strokeWidth="2" />
        </svg>
        <svg width="13" height="32" viewBox="0 0 13 32" className="absolute -right-1.5 -top-0.5"><path d="M0 0h13v3L8 9v23H6V9L0 3z" fill="#666" /></svg>
      </div>
      <button aria-label="Ajustes de la línea de tiempo" className="ml-auto mr-[13px] text-[#999]"><FaCog size={16} /></button>
    </footer>
  );
}

/* ---------- Windows taskbar ---------- */

function Taskbar() {
  return (
    <footer className="flex h-10 shrink-0 bg-[#1d1d1d] font-['Open_Sans',sans-serif] text-white">
      <button aria-label="Inicio" className="flex w-12 items-center justify-center">
        <svg width="16" height="16" viewBox="0 0 16 16" fill="#fff"><path d="M0 2l6.500-1v6.500H0zM7.500 1L16 0v7.500H7.500zM0 8.500h6.500V15L0 14zM7.500 8.500H16V16l-8.500-1z" /></svg>
      </button>
      <label className="flex w-[344px] items-center border border-[#bcbcbc] bg-[#f1f1f1] pl-[11px]">
        <Search size={18} strokeWidth={1.5} className="-scale-x-100 text-[#222]" />
        <input aria-label="Buscar" placeholder="Escribe aquí para buscar" className="ml-2.5 flex-1 bg-transparent text-sm outline-none placeholder:text-[#333]" />
      </label>
      <button aria-label="Vista de tareas" className="flex w-[50px] items-center justify-center">
        <svg width="17" height="16" viewBox="0 0 17 16" fill="none" stroke="#fff"><path d="M.5 0v2.500h11V0M.5 5.500h11v6H.500zM.5 16v-2.500h11V16M15.500 0v3M15.500 9v7" /><path d="M14 4h3v3h-3z" fill="#fff" stroke="none" /></svg>
      </button>
      <button aria-label="Edge" className="flex w-[49px] items-center justify-center">
        <svg width="24" height="24" viewBox="0 0 24 24">
          <defs><linearGradient id="edge"><stop offset="0" stopColor="#1794e0" /><stop offset="1" stopColor="#5fdc58" /></linearGradient></defs>
          <circle cx="12" cy="12" r="12" fill="#1170c8" />
          <path d="M0 11C2-3 23-4 24 11c0 5-5 6-9 4 2-2 1-6-3-7C7 7 2 8 0 11z" fill="url(#edge)" />
          <path d="M9 10c-3 6 2 12 12 9-4 6-12 6-15 2S4 10 9 10z" fill="#0c3f86" />
          <path d="M12 9c3 0 4 4 2 6 2 3 6 3 8 2l-2 3c-6 2-11-1-11-6 0-3 1-5 3-5z" fill="#1d1d1d" />
        </svg>
      </button>
      <button aria-label="Correo" className="flex w-[49px] items-center justify-center">
        <svg width="24" height="24" viewBox="0 0 24 24"><path d="M0 9l12-8 12 8v14H0z" fill="#0a5ca8" /><path d="M3 8h18v8H3z" fill="#f4f4f4" /><path d="M0 9l12 7 12-7v14H0z" fill="#28a8ea" /><path d="M0 23l14-8 10-6v14z" fill="#50d0ff" opacity=".6" /></svg>
      </button>
      <button aria-label="Dropbox" className="flex w-[49px] items-center justify-center"><FaDropbox size={24} /></button>
      <button aria-label="Explorador" className="flex w-[49px] items-center justify-center">
        <svg width="22" height="20" viewBox="0 0 22 20"><path d="M0 1h8l2 3H0z" fill="#e9a21b" /><path d="M0 4h10l2-2h10v17H0z" fill="#fdd267" /><path d="M5 20v-9h13v9h-4v-4H9v4z" fill="#3b93dd" /></svg>
      </button>
      <button aria-label="Chrome" className="mx-[5px] flex w-10 items-center justify-center border-b-2 border-[#76b9ed]">
        <svg width="22" height="22" viewBox="0 0 22 22"><circle cx="11" cy="11" r="11" fill="#34a34f" /><path d="M11 5.500h9.500A11 11 0 0111 22L15.800 13.700z" fill="#fccb3d" /><path d="M1.500 5.500A11 11 0 0120.500 5.500H11L6.200 13.700z" fill="#e2463a" /><circle cx="11" cy="11" r="5.500" fill="#fff" /><circle cx="11" cy="11" r="4.300" fill="#4a86f0" /></svg>
      </button>
      <button aria-label="Fusion 360" className="flex w-12 items-center justify-center border-b-2 border-[#76b9ed] bg-[#4b4b4b]"><FusionLogo size={24} /></button>
      <button aria-label="Ayuda" className="ml-auto">
        <svg width="24" height="22" viewBox="0 0 24 22"><circle cx="11" cy="11" r="10.500" fill="#fff" /><circle cx="11" cy="11" r="8.500" fill="#1593d6" /><path d="M7.500 8.500c0-5 7-4.500 7-.5 0 3-3.500 2.500-3.500 5.500M11 15.500v2" stroke="#fff" strokeWidth="2.200" fill="none" /><circle cx="19" cy="16" r="5" fill="#ef1010" /><path d="M18.300 13h1.500v4h-1.500zM18.300 18h1.500v1.300h-1.500z" fill="#fff" /></svg>
      </button>
      <button className="ml-[76px] flex items-center text-sm">
        <svg width="20" height="20" viewBox="0 0 20 20"><defs><linearGradient id="sun" x2="1" y2="1"><stop offset=".1" stopColor="#ffe47a" /><stop offset="1" stopColor="#fb9600" /></linearGradient></defs><circle cx="10" cy="10" r="9" fill="url(#sun)" /></svg>
        <span className="ml-2.5">19°C</span>
        <span className="ml-2">Soleado</span>
      </button>
      <div className="ml-2.5 flex items-center">
        <ChevronUp size={20} strokeWidth={1.25} />
        <svg width="18" height="18" viewBox="0 0 18 18" fill="none" className="ml-1" stroke="#fff"><path d="M1.500 3l14-2v9M1.500 3v11h8" /><path d="M6 11V9a3 3 0 015-2M11 4v3H8M11 8a3 3 0 01-4 3H5" /><circle cx="13" cy="14" r="3.500" fill="#2f76c9" stroke="none" /></svg>
        <svg width="15" height="10" viewBox="0 0 15 10" fill="none" className="ml-2" stroke="#fff"><path d="M.5.500h12v9H.500zM13 3h1.500v4H13" /><path d="M2 2h2v6H2z" fill="#fff" stroke="none" /></svg>
        <svg width="14" height="14" viewBox="0 0 14 14" fill="none" className="ml-3" stroke="#fff"><path d="M1 12C1 6 6 1 13 1" opacity=".6" /><path d="M4 13c0-5 4-9 9-9M7 13c0-3 2-6 6-6" /><path d="M10 13c0-2 1-3 3-3v3z" fill="#fff" /></svg>
      </div>
      <button className="ml-2.5 text-xs">ESP</button>
      <time className="ml-[18px] flex w-[52px] flex-col justify-center text-center font-['Noto_Sans',sans-serif] text-[11px] leading-[18px] whitespace-nowrap">
        <span>15:33</span>
        <span>5/11/2021</span>
      </time>
      <button aria-label="3 notificaciones" className="ml-5 mr-3 flex items-center pt-0.5">
        <svg width="24" height="24" viewBox="0 0 24 24"><path d="M0 0h16v13H9l-3 3v-3H0z" fill="#fff" /><path d="M3 3.500h10M3 6.500h10M3 9.500h7" stroke="#1d1d1d" /><circle cx="15.500" cy="15.500" r="7.500" fill="#333" stroke="#8a8a8a" /><text x="12.500" y="19.500" fontSize="11" fill="#fff">3</text></svg>
      </button>
      <div className="mr-1 w-px bg-[#555]" />
    </footer>
  );
}

function BrowserPanel() {
  return (
    <div className="absolute -top-4 left-[419px] w-[267px] border border-[#c8c8c8] bg-[#f1f1f1] font-['Roboto',sans-serif] text-[11px] text-[#666]">
      {[{ name: "NAVEGADOR", sign: "M2 4h5v1H2z" }, { name: "COMENTARIOS", sign: "M2 4h2V2h1v2h2v1H5v2H4V5H2z" }].map((row) => (
        <button key={row.name} className="flex h-[25px] w-full items-center gap-2.5 border-[#cfcfcf] pl-[5px] pt-px first:border-b">
          <svg width="9" height="9" viewBox="0 0 9 9"><circle cx="4.500" cy="4.500" r="4.500" fill="#2c2c2c" /><path d={row.sign} fill="#fff" /></svg>
          {row.name}
        </button>
      ))}
    </div>
  );
}

export default function App() {
  return (
    <div className="relative flex h-screen flex-col overflow-hidden bg-white font-['Liberation_Sans',Arial,sans-serif]">
      <TitleBar />
      <div className="flex min-h-0 flex-1">
        <DataPanel />
        <div className="flex min-w-0 flex-1 flex-col">
          <DocumentStrip />
          <Ribbon />
          <Viewport />
          <Timeline />
        </div>
      </div>
      <Taskbar />
      <BrowserPanel />
    </div>
  );
}
